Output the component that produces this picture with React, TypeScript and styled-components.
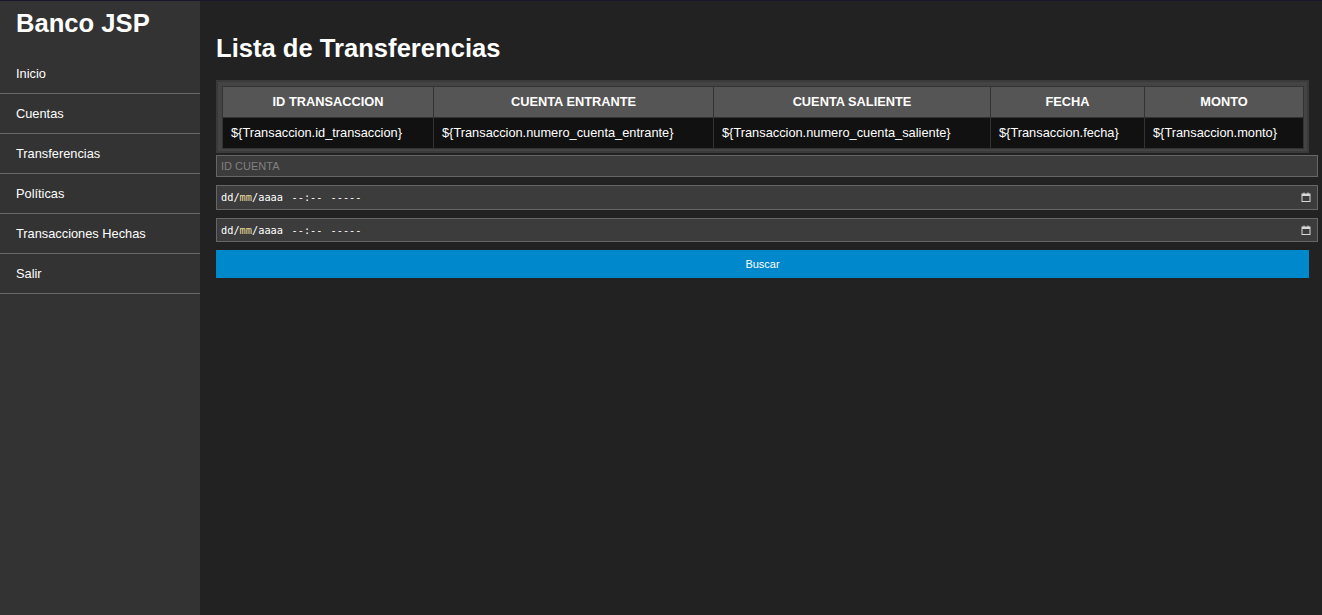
import React from "react";
import styled, { createGlobalStyle } from "styled-components";

const GlobalStyle = createGlobalStyle`
  html, body { margin: 0; padding: 0; background: #222222; }
  body { font-family: "Liberation Sans", Arial, sans-serif; color: #ffffff; }
  * { box-sizing: border-box; }
`;

const Page = styled.div`
  display: flex;
  min-height: 100vh;
  border-top: 1px solid #17172c;
`;

const Sidebar = styled.aside`
  width: 200px;
  flex-shrink: 0;
  background: #333333;
  display: flex;
  flex-direction: column;
`;

const Brand = styled.h2`
  margin: 0;
  padding: 8px 16px 0;
  height: 53px;
  font-size: 25.6px;
  line-height: 29px;
  font-weight: bold;
  color: #ffffff;
`;

const NavList = styled.nav`
  display: flex;
  flex-direction: column;
`;

const NavItem = styled.a`
  display: flex;
  align-items: center;
  height: 40px;
  padding: 0 16px;
  border-bottom: 1px solid #666666;
  font-size: 12.8px;
  color: #ffffff;
  text-decoration: none;
`;

const Main = styled.main`
  flex: 1;
  min-width: 0;
  padding: 32px 13px 16px 16px;
`;

const Title = styled.h1`
  margin: 0 0 17px;
  font-size: 25.6px;
  line-height: 30px;
  font-weight: bold;
  color: #ffffff;
`;

const TableFrame = styled.div`
  background: #444444;
  border: 2px solid #3a3a3a;
  padding: 4px 4px 2px 4px;
`;

const Table = styled.table`
  width: 100%;
  border-collapse: collapse;
  table-layout: fixed;
  font-size: 12.8px;
`;

const Th = styled.th<{ $w: number }>`
  width: ${(p) => p.$w}px;
  background: #555555;
  border: 1px solid #333333;
  padding: 8px;
  font-weight: bold;
  text-align: center;
  color: #ffffff;
  line-height: 14px;
`;

const Td = styled.td`
  background: #111111;
  border: 1px solid #333333;
  padding: 8px;
  text-align: left;
  color: #ffffff;
  line-height: 14px;
  white-space: nowrap;
`;

const Form = styled.form`
  display: flex;
  flex-direction: column;
  margin-top: 2px;
`;

const TextInput = styled.input`
  width: calc(100% + 9px);
  height: 22px;
  padding: 0 4px;
  background: #3c3c3c;
  border: 1px solid #666666;
  color: #ffffff;
  font-family: "Liberation Sans", Arial, sans-serif;
  font-size: 11px;
  outline: none;
  &::placeholder { color: #808080; }
`;

const DateField = styled.div`
  position: relative;
  display: flex;
  align-items: center;
  width: calc(100% + 9px);
  height: 24.5px;
  margin-top: 8px;
  padding: 0 4px;
  background: #3c3c3c;
  border: 1px solid #666666;
  font-family: "DejaVu Sans Mono", "Liberation Mono", monospace;
  font-size: 10.3px;
  color: #ffffff;
  white-space: pre;
`;

const Segment = styled.span<{ $gap?: number; $tint?: boolean }>`
  margin-left: ${(p) => p.$gap ?? 0}px;
  color: ${(p) => (p.$tint ? "#eadf9c" : "#ffffff")};
`;

const CalendarIcon = styled.svg`
  position: absolute;
  right: 6px;
  top: 50%;
  transform: translateY(-50%);
  width: 10px;
  height: 11px;
`;

const SearchButton = styled.button`
  width: 100%;
  height: 28px;
  margin-top: 8px;
  background: #0088cc;
  border: none;
  color: #ffffff;
  font-family: "Liberation Sans", Arial, sans-serif;
  font-size: 11px;
  cursor: pointer;
`;

const navItems = [
  "Inicio",
  "Cuentas",
  "Transferencias",
  "Políticas",
  "Transacciones Hechas",
  "Salir",
];

const columns = [
  { label: "ID TRANSACCION", w: 211, cell: "${Transaccion.id_transaccion}" },
  { label: "CUENTA ENTRANTE", w: 280, cell: "${Transaccion.numero_cuenta_entrante}" },
  { label: "CUENTA SALIENTE", w: 277, cell: "${Transaccion.numero_cuenta_saliente}" },
  { label: "FECHA", w: 154, cell: "${Transaccion.fecha}" },
  { label: "MONTO", w: 159, cell: "${Transaccion.monto}" },
];

function Calendar() {
  return (
    <CalendarIcon viewBox="0 0 10 11" fill="none">
      <rect x="1" y="2.5" width="8" height="7.5" stroke="#d8d8d8" strokeWidth="1" />
      <rect x="1" y="2.5" width="8" height="2" fill="#d8d8d8" />
      <rect x="2.5" y="1" width="1" height="2" fill="#d8d8d8" />
      <rect x="6.5" y="1" width="1" height="2" fill="#d8d8d8" />
    </CalendarIcon>
  );
}

function DateTimeField() {
  return (
    <DateField>
      <Segment>dd/</Segment>
      <Segment $tint>mm</Segment>
      <Segment>/aaaa</Segment>
      <Segment $gap={8.5}>--:--</Segment>
      <Segment $gap={8}>-----</Segment>
      <Calendar />
    </DateField>
  );
}

export default function App() {
  return (
    <>
      <GlobalStyle />
      <Page>
        <Sidebar>
          <Brand>Banco JSP</Brand>
          <NavList>
            {navItems.map((item) => (
              <NavItem key={item} href="#">
                {item}
              </NavItem>
            ))}
          </NavList>
        </Sidebar>
        <Main>
          <Title>Lista de Transferencias</Title>
          <TableFrame>
            <Table>
              <thead>
                <tr>
                  {columns.map((c) => (
                    <Th key={c.label} $w={c.w}>
                      {c.label}
                    </Th>
                  ))}
                </tr>
              </thead>
              <tbody>
                <tr>
                  {columns.map((c) => (
                    <Td key={c.label}>{c.cell}</Td>
                  ))}
                </tr>
              </tbody>
            </Table>
          </TableFrame>
          <Form onSubmit={(e) => e.preventDefault()}>
            <TextInput type="text" placeholder="ID CUENTA" />
            <DateTimeField />
            <DateTimeField />
            <SearchButton type="submit">Buscar</SearchButton>
          </Form>
        </Main>
      </Page>
    </>
  );
}
